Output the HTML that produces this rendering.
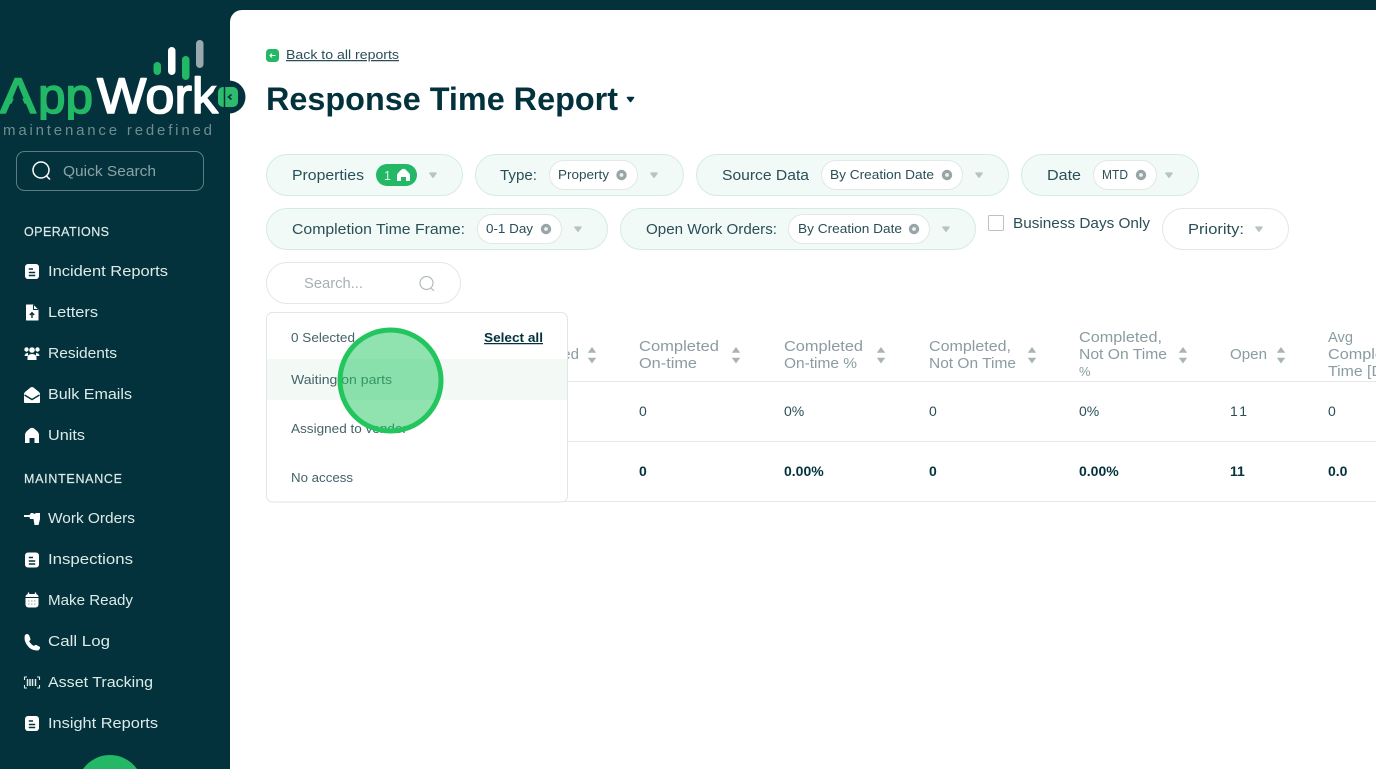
<!DOCTYPE html>
<html><head><meta charset="utf-8"><title>Response Time Report</title>
<style>
html,body{margin:0;padding:0;background:#fff;overflow:hidden;width:1376px;height:769px}
svg{display:block;position:absolute;left:0;top:0}
text{font-family:"Liberation Sans",sans-serif}
.n{font-size:15px;fill:#dcebe8}
.h{font-size:12.5px;fill:#dcebe8;stroke:#dcebe8;stroke-width:.2px}
.p{font-size:14.5px;fill:#2a4f58}
.c{font-size:12.5px;fill:#2a4f58}
.d{font-size:12.5px;fill:#46636a}
.t{font-size:15px;fill:#8a9ca1}
.r{font-size:14px;fill:#2a4f58}
.b{font-size:14px;fill:#04323c;font-weight:bold}
</style></head><body>
<svg width="1376" height="769" viewBox="0 0 1376 769" xmlns="http://www.w3.org/2000/svg">
<defs>
<g id="caret"><path d="M-3-1.800H3L0 2.200Z" fill="#b8c3c3" stroke="#b8c3c3" stroke-width="1.600" stroke-linejoin="round"/></g>
<g id="x"><circle r="5.200" fill="#98a4a6"/><circle r="1.900" fill="#eef1f1"/></g>
<g id="sort"><path d="M0-8L4.200-2.300H-4.200Z" fill="#a9b4b6"/><path d="M0 8.500L4.200 2.800H-4.200Z" fill="#a9b4b6"/></g>
<g id="doc"><rect x="-7" y="-7.500" width="14" height="15" rx="3" fill="#fff"/><path d="M-3.200-2.500H1M-3.200 1H3.200M-3.200 4H3.200" stroke="#04323c" stroke-width="1.400"/></g>
</defs>

<rect width="1376" height="769" fill="#04323c"/>
<path d="M230 769V22A12 12 0 0 1 242 10H1376V769Z" fill="#fff"/>

<!-- logo -->
<g>
<text y="113" font-size="50" fill="#22b866" stroke="#22b866" stroke-width="1.600" stroke-linejoin="round"><tspan x="0" textLength="36" lengthAdjust="spacingAndGlyphs">A</tspan><tspan x="38" textLength="55" lengthAdjust="spacingAndGlyphs">pp</tspan></text>
<path d="M14 98H22L25 105H11Z" fill="#04323c"/>
<rect x="35" y="120" width="60" height="6" fill="#04323c"/>
<text x="97" y="113" textLength="121" lengthAdjust="spacingAndGlyphs" font-size="50" fill="#fff" stroke="#fff" stroke-width="1.600" stroke-linejoin="round">Work</text>
<rect x="153.500" y="62" width="7.500" height="13" rx="3.700" fill="#22b866"/>
<rect x="168" y="47" width="7.500" height="28" rx="3.700" fill="#fff"/>
<rect x="182" y="56" width="7.500" height="24" rx="3.700" fill="#22b866"/>
<rect x="196" y="40" width="7.500" height="28" rx="3.700" fill="#9aa9ad"/>
<text x="3" y="135" textLength="209" font-size="15" fill="#6f8c92">maintenance redefined</text>
</g>
<circle cx="229" cy="97" r="16.500" fill="#04323c"/>
<rect x="218" y="87" width="20" height="20" rx="5" fill="#2dbb6e"/>
<path d="M224.500 87V107" stroke="#04323c" stroke-width="1.500"/>
<path d="M231.500 94.500L228.500 97L231.500 99.500" fill="none" stroke="#04323c" stroke-width="1.700"/>

<!-- quick search -->
<rect x="16.500" y="151.500" width="187" height="39" rx="8" fill="none" stroke="#5d7b82"/>
<circle cx="41" cy="170" r="8" fill="none" stroke="#fff" stroke-width="1.500"/>
<path d="M46.500 176L50 179.500" stroke="#fff" stroke-width="1.500"/>
<text x="63" y="176" textLength="93" lengthAdjust="spacingAndGlyphs" font-size="14.500" fill="#8aa3a8">Quick Search</text>

<!-- nav -->
<text class="h" x="24" y="236" textLength="85" lengthAdjust="spacing">OPERATIONS</text>
<text class="h" x="24" y="483" textLength="98" lengthAdjust="spacing">MAINTENANCE</text>
<text class="n" x="48" y="276" textLength="120" lengthAdjust="spacingAndGlyphs">Incident Reports</text>
<text class="n" x="48" y="317" textLength="50" lengthAdjust="spacingAndGlyphs">Letters</text>
<text class="n" x="48" y="358" textLength="69" lengthAdjust="spacingAndGlyphs">Residents</text>
<text class="n" x="48" y="399" textLength="84" lengthAdjust="spacingAndGlyphs">Bulk Emails</text>
<text class="n" x="48" y="440" textLength="37" lengthAdjust="spacingAndGlyphs">Units</text>
<text class="n" x="48" y="523" textLength="87" lengthAdjust="spacingAndGlyphs">Work Orders</text>
<text class="n" x="48" y="564" textLength="85" lengthAdjust="spacingAndGlyphs">Inspections</text>
<text class="n" x="48" y="605" textLength="85" lengthAdjust="spacingAndGlyphs">Make Ready</text>
<text class="n" x="48" y="646" textLength="62" lengthAdjust="spacingAndGlyphs">Call Log</text>
<text class="n" x="48" y="687" textLength="105" lengthAdjust="spacingAndGlyphs">Asset Tracking</text>
<text class="n" x="48" y="728" textLength="110" lengthAdjust="spacingAndGlyphs">Insight Reports</text>

<!-- nav icons -->
<use href="#doc" x="32" y="271.500"/>
<path d="M26.500 305H33L38 310V320H26.500Z" fill="#fff" stroke="#fff" stroke-linejoin="round"/>
<path d="M33.500 305V309.500H38" fill="none" stroke="#04323c"/>
<path d="M32 318V313M29.800 315L32 312.800L34.200 315" fill="none" stroke="#04323c" stroke-width="1.400"/>
<circle cx="32" cy="350" r="2.800" fill="#fff"/><circle cx="26.500" cy="349.500" r="2.200" fill="#fff"/><circle cx="37.500" cy="349.500" r="2.200" fill="#fff"/>
<path d="M24.500 356Q25 352.800 28 353V356ZM39.500 356Q39 352.800 36 353V356ZM27.500 360V357Q28 354 32 354Q36 354 36.500 357V360Z" fill="#fff"/>
<path d="M24 394Q24 393 25 392L30.500 387.500Q32 386.500 33.500 387.500L39 392Q40 393 40 394V402Q40 403 39 403H25Q24 403 24 402Z" fill="#fff"/>
<path d="M24.500 395L32 399.500L39.500 395" fill="none" stroke="#04323c" stroke-width="1.400"/>
<path d="M25 443V435Q25 433 27 431L30 428.500Q32 427 34 428.500L37 431Q39 433 39 435V443H34.500V438H29.500V443Z" fill="#fff"/>
<path d="M24 515H29.500L31 513H33L34.500 514L36 513H40V519L38.500 525H34.500L33.500 519H30L29.500 517H24Z" fill="#fff"/>
<use href="#doc" x="32" y="560"/>
<rect x="25.500" y="594" width="13" height="13.500" rx="3" fill="#fff"/>
<path d="M28.500 592.500V595.500M35.500 592.500V595.500" stroke="#fff" stroke-width="1.400"/>
<path d="M25.500 597.500H38.500" stroke="#04323c"/>
<path d="M28 601H36M28 604H36" stroke="#8fa3a6" stroke-dasharray="1.500 1.500"/>
<path d="M25 635Q27 633 29 635L30.500 639Q30.500 640.500 29 641Q31 644.500 34 646Q35 644.500 36.500 645L40 647Q40.500 649 38 650.500Q31 651 27 645Q23.500 640 25 635Z" fill="#fff"/>
<path d="M27 677H24.500V680M37 677H39.500V680M27 688H24.500V685M37 688H39.500V685" fill="none" stroke="#dcebe8" stroke-width="1.100"/>
<path d="M27.500 679V686M30 679V686M32.500 679V686M35.500 679V686" stroke="#dcebe8" stroke-width="1.500"/>
<use href="#doc" x="32" y="723.500"/>
<path d="M83 769A33 33 0 0 1 137 769Z" fill="#22b866"/>

<!-- header -->
<rect x="266" y="49" width="13" height="13" rx="3.500" fill="#22b866"/>
<path d="M275.500 55.500H270M272 53.500L270 55.500L272 57.500" fill="none" stroke="#fff" stroke-width="1.100"/>
<text x="286" y="59" textLength="113" lengthAdjust="spacingAndGlyphs" font-size="12.500" fill="#2a4f58" text-decoration="underline">Back to all reports</text>
<text x="266" y="110" textLength="352" lengthAdjust="spacingAndGlyphs" font-size="32" font-weight="bold" fill="#04323c">Response Time Report</text>
<path d="M627.500 97.500H633.500L630.500 101.500Z" fill="#04323c" stroke="#04323c" stroke-width="1.600" stroke-linejoin="round"/>

<!-- filters -->
<g fill="#f1faf6" stroke="#d5ebe2">
<rect x="266.500" y="154.500" width="196" height="41" rx="20.500"/>
<rect x="475.500" y="154.500" width="208" height="41" rx="20.500"/>
<rect x="696.500" y="154.500" width="312" height="41" rx="20.500"/>
<rect x="1021.500" y="154.500" width="177" height="41" rx="20.500"/>
<rect x="266.500" y="208.500" width="341" height="41" rx="20.500"/>
<rect x="620.500" y="208.500" width="355" height="41" rx="20.500"/>
</g>
<g fill="#fff" stroke="#e1e8e6">
<rect x="549.500" y="160.500" width="88" height="29" rx="14.500"/>
<rect x="821.500" y="160.500" width="141" height="29" rx="14.500"/>
<rect x="1093.500" y="160.500" width="63" height="29" rx="14.500"/>
<rect x="477.500" y="214.500" width="84" height="29" rx="14.500"/>
<rect x="788.500" y="214.500" width="141" height="29" rx="14.500"/>
<rect x="1162.500" y="208.500" width="126" height="41" rx="20.500"/>
<rect x="266.500" y="262.500" width="194" height="41" rx="20.500"/>
</g>
<text class="p" x="292" y="180" textLength="72" lengthAdjust="spacingAndGlyphs">Properties</text>
<rect x="376" y="164" width="41" height="22" rx="11" fill="#22b866"/>
<text x="384" y="180" font-size="12.500" fill="#d8f5e4">1</text>
<path d="M397 181V175Q397 174 398.500 172.500L401.500 169.500Q403.500 168 405.500 169.500L408.500 172.500Q410 174 410 175V181H406V177H401V181Z" fill="#fff"/>
<use href="#caret" x="433" y="175"/>
<text class="p" x="500" y="180" textLength="37" lengthAdjust="spacingAndGlyphs">Type:</text>
<text class="c" x="558" y="179" textLength="51" lengthAdjust="spacingAndGlyphs">Property</text>
<use href="#x" x="621.500" y="175"/><use href="#caret" x="654" y="175"/>
<text class="p" x="722" y="180" textLength="87" lengthAdjust="spacingAndGlyphs">Source Data</text>
<text class="c" x="830" y="179" textLength="104" lengthAdjust="spacingAndGlyphs">By Creation Date</text>
<use href="#x" x="947" y="175"/><use href="#caret" x="979" y="175"/>
<text class="p" x="1047" y="180" textLength="34" lengthAdjust="spacingAndGlyphs">Date</text>
<text class="c" x="1102" y="179" textLength="26" lengthAdjust="spacingAndGlyphs">MTD</text>
<use href="#x" x="1141" y="175"/><use href="#caret" x="1169" y="175"/>
<text class="p" x="292" y="234" textLength="173" lengthAdjust="spacingAndGlyphs">Completion Time Frame:</text>
<text class="c" x="486" y="233" textLength="47" lengthAdjust="spacingAndGlyphs">0-1 Day</text>
<use href="#x" x="546" y="229"/><use href="#caret" x="578" y="229"/>
<text class="p" x="646" y="234" textLength="131" lengthAdjust="spacingAndGlyphs">Open Work Orders:</text>
<text class="c" x="798" y="233" textLength="104" lengthAdjust="spacingAndGlyphs">By Creation Date</text>
<use href="#x" x="914" y="229"/><use href="#caret" x="946" y="229"/>
<rect x="988.500" y="215.500" width="15" height="15" rx="1" fill="#fff" stroke="#b9c2c4"/>
<text class="p" x="1013" y="228" textLength="137" lengthAdjust="spacingAndGlyphs">Business Days Only</text>
<text class="p" x="1188" y="234" textLength="56" lengthAdjust="spacingAndGlyphs">Priority:</text>
<use href="#caret" x="1259" y="229"/>
<text x="304" y="288" textLength="59" lengthAdjust="spacingAndGlyphs" font-size="14.500" fill="#a6b0b3">Search...</text>
<circle cx="426.500" cy="283" r="6.500" fill="none" stroke="#b4bcbe" stroke-width="1.200"/>
<path d="M431 288L434 291" stroke="#b4bcbe" stroke-width="1.200"/>

<!-- table -->
<path d="M560 381.500H1376M560 441.500H1376M560 501.500H1376" stroke="#e6e8e8"/>
<text class="t" x="579" y="359" text-anchor="end">Completed</text>
<text class="t" x="639" y="351" textLength="80" lengthAdjust="spacingAndGlyphs">Completed</text>
<text class="t" x="639" y="368" textLength="58" lengthAdjust="spacingAndGlyphs">On-time</text>
<text class="t" x="784" y="351" textLength="79" lengthAdjust="spacingAndGlyphs">Completed</text>
<text class="t" x="784" y="368" textLength="73" lengthAdjust="spacingAndGlyphs">On-time %</text>
<text class="t" x="929" y="351" textLength="82" lengthAdjust="spacingAndGlyphs">Completed,</text>
<text class="t" x="929" y="368" textLength="87" lengthAdjust="spacingAndGlyphs">Not On Time</text>
<text class="t" x="1079" y="342" textLength="83" lengthAdjust="spacingAndGlyphs">Completed,</text>
<text class="t" x="1079" y="359" textLength="88" lengthAdjust="spacingAndGlyphs">Not On Time</text>
<text x="1079" y="376" font-size="13" fill="#8a9ca1">%</text>
<text class="t" x="1230" y="359" textLength="37" lengthAdjust="spacingAndGlyphs">Open</text>
<text class="t" x="1328" y="342" textLength="25" lengthAdjust="spacingAndGlyphs">Avg</text>
<text class="t" x="1328" y="359" textLength="82" lengthAdjust="spacingAndGlyphs">Completion</text>
<text class="t" x="1328" y="376" textLength="84" lengthAdjust="spacingAndGlyphs">Time [Days]</text>
<use href="#sort" x="592" y="355"/><use href="#sort" x="736" y="355"/><use href="#sort" x="881" y="355"/><use href="#sort" x="1032" y="355"/><use href="#sort" x="1183" y="355"/><use href="#sort" x="1281" y="355"/>
<text class="r" x="639" y="416">0</text>
<text class="r" x="784" y="416">0%</text>
<text class="r" x="929" y="416">0</text>
<text class="r" x="1079" y="416">0%</text>
<text class="r" x="1230" y="416" textLength="17" lengthAdjust="spacing">11</text>
<text class="r" x="1328" y="416">0</text>
<text class="b" x="639" y="476">0</text>
<text class="b" x="784" y="476">0.00%</text>
<text class="b" x="929" y="476">0</text>
<text class="b" x="1079" y="476">0.00%</text>
<text class="b" x="1230" y="476">11</text>
<text class="b" x="1328" y="476">0.0</text>

<!-- dropdown -->
<rect x="266.500" y="312.500" width="301" height="189.500" rx="6" fill="#fff" stroke="#e2e6e6"/>
<rect x="267" y="359" width="300" height="41" fill="#f3faf6"/>
<text class="d" x="291" y="342" textLength="64" lengthAdjust="spacingAndGlyphs">0 Selected</text>
<text x="484" y="342" textLength="59" lengthAdjust="spacingAndGlyphs" font-size="12.500" font-weight="bold" fill="#04323c" text-decoration="underline">Select all</text>
<text class="d" x="291" y="384" textLength="101" lengthAdjust="spacingAndGlyphs">Waiting on parts</text>
<text class="d" x="291" y="433" textLength="116" lengthAdjust="spacingAndGlyphs">Assigned to vendor</text>
<text class="d" x="291" y="482" textLength="62" lengthAdjust="spacingAndGlyphs">No access</text>

<!-- click highlight -->
<circle cx="390.500" cy="380.500" r="50.500" fill="#22c55e" fill-opacity=".5" stroke="#22c55e" stroke-width="5"/>
</svg>
</body></html>
